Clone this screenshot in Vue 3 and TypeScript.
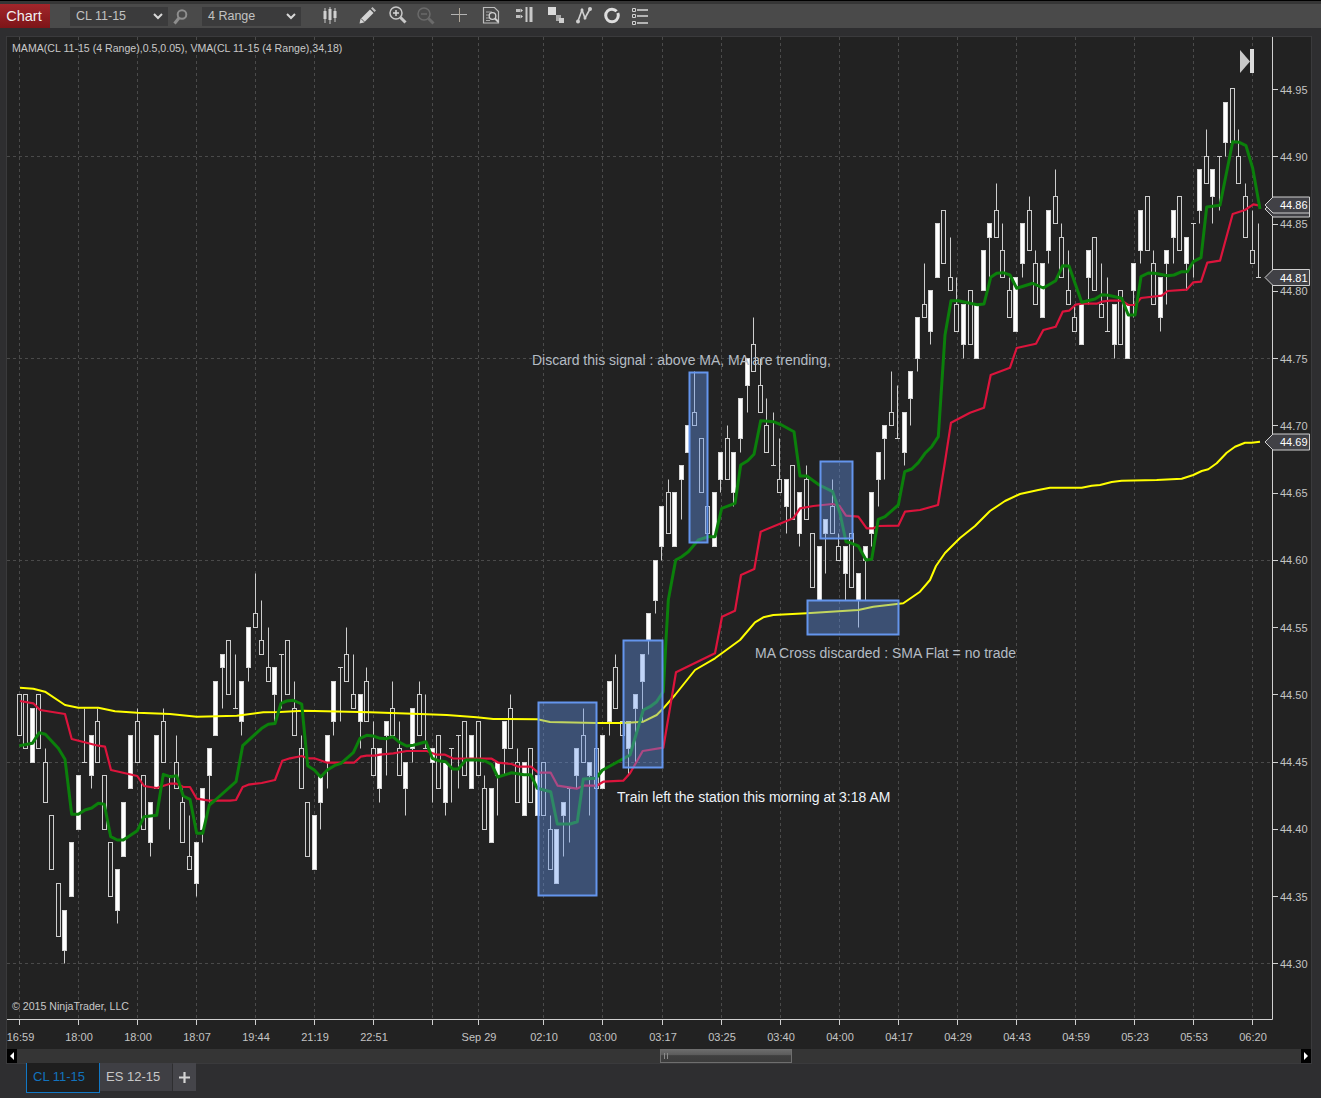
<script setup lang="ts">
interface Bar { x: number; kind: string; top: number; bot: number; high: number; low: number }

const Y0 = 963.4
const TICK = 13.46
const yOf = (t: number) => Math.round(Y0 - t * TICK)

const raw = `h20,17 h20,16 f19,15 h20,16 h15,12,16 h11,7 h6,2 f4,1,,0 f9,5 f14,10
d15,15,19,15 f17,14,,13 h18,15,19 h14,10 h9,5 f7,4,,3 f12,8 f17,13 h18,15,19 h14,10
f12,9,,8 f17,13 h18,15,19 d14,14,14,10 h15,13,17 h12,9,13 h8,7,11 f9,6,,5 f13,10,,9 f16,14,,12
f21,17 f23,22,,19 h24,20 d19,19,23,19 f21,18,,17 f25,22,,21 h26,25,29 h24,23,27 h22,21,25 f22,20,,18
d23,23,23,19 h24,20 h19,17,21 h16,13,17 h12,8 f11,7 f14,12,,10 f17,15,,13 f21,18,,17 d22,22,22,18
h23,21,25 h20,19,23 f20,18,,16 h21,18,22 h16,14,18 f16,13,,12 f18,17,,14 h19,17,21 h16,14,18 f15,13,,11
f19,16,,15 h20,17,21 d16,16,20,16 f16,15,,12 h17,13 f15,12,,11 d16,16,16,12 d17,17,17,13 h18,14 f17,13
h18,14 h13,10,14 f13,9 f15,14,,11 f18,16,,14 h19,16,20 h15,12,16 f15,11 h16,12 f14,11
h15,11 h10,7,11 f10,6 f12,11,,8 d13,13,13,9 f16,14,,13 h17,15,19 f15,14,,11 h16,13 f17,13
f21,18,,17 h22,19,23 h18,17 f18,16,,14 f20,19,,15 f23,21,,18 f26,24,,23 f30,27,,26 f34,31,,30 h35,32,36
f35,31 f37,36,,33 f40,38 h41,40,44 h39,35 h34,32 f35,31 f38,36,,35 h39,36,40 f38,35,,34
f42,39,,38 f45,43,,41 h46,44,48 h43,41,45 h40,38,42 d37,37,41,37 h36,35,39 f36,34,,32 h37,33 f35,32,,31
h36,33,37 h32,28 f31,27 f33,32,,29 h34,32,36 h31,30,32 f31,29,,27 h32,28 f29,27,,25 f31,30,,27
f35,32,,31 f38,36,,34 f40,39,,36 h41,40,44 d39,39,43,39 f41,38,,37 f44,42,,40 f48,45,,44 h49,48,52 f50,47,,46
f55,51 h56,52 h51,50,54 h49,47,51 f49,46,,45 h50,46 f49,45 f53,50 f55,54,,51 h56,54,58
h53,51,55 h50,48,51 f51,47 f55,52,,51 h56,53,57 h52,49,53 f52,48 f56,53,,52 h57,55,59 h54,51,55
h50,49,53 h48,47,49 f49,46 f53,51,,49 h54,50 h49,48,52 d47,47,51,47 f49,46,,45 h50,46 f49,45
f52,50,,48 f56,53,,52 h57,53 h52,49,53 f51,48,,47 f53,52,,49 f56,54,,52 h57,53 f54,52,,50 d55,55,55,51
f59,56,,55 h60,58,62 f59,57,,55 d60,60,60,56 f64,61,,60 h65,61 h60,58,62 h57,54,58 h53,52,56 d51,51,55,51`

const bars: Bar[] = raw.trim().split(/\s+/).map((s, i) => {
  const p = s.slice(1).split(',')
  const top = Number(p[0])
  const bot = Number(p[1])
  return {
    x: Math.floor(19 + i * 6.5588) + 0.5,
    kind: s[0],
    top: yOf(top) + 0.5,
    bot: yOf(bot) + 0.5,
    high: yOf(p[2] ? Number(p[2]) : top) + 0.5,
    low: yOf(p[3] ? Number(p[3]) : bot) + 0.5,
  }
})

const green = `19.3,745.7 32.3,743.3 39.3,732.7 45.3,734.3 58.3,748.3 65,759.3 71.7,814.3 78.3,814.3 85,810 91.7,808 98.3,803.3 104.3,804.3 110.7,836.7 117.3,840 123.3,840 137.3,830.7 144,816.7 156.7,815.3 163.3,774.3 170,776.7 176.7,775.7 183.3,796 190,799.3 196.7,833.3 202.7,833.3 209.3,805 215.3,800 236,781.7 242.7,745.7 255,734.3 261.7,728.3 268.3,724.3 275,723.5 281,703.3 286.7,701 293.3,700.3 301.7,704 307.7,765.7 314.3,770 320.7,777 327.3,770 334.3,765.7 341,763.3 353.3,752.7 360,738.3 366.7,735.3 373.3,736 380,738.3 386.7,738.7 392.7,736.7 400,742.7 406.7,746 413.3,745.3 426,741.7 432.3,758.3 438.3,760.7 445.7,761.7 452.7,769 458.3,769 465.7,760 478.3,760 485,761 491.7,764.3 497.7,777 511.7,772.7 524,774.7 530.7,774.7 537.3,788.3 550.7,791.7 557.3,824 570,824 577.3,821.7 583.3,779 596,778.3 602.3,770.3 630,755 643.3,710 650,706.7 656.7,701.7 663.3,691.7 666,640 668.3,600 675.7,560 681.7,556.7 688.3,551.7 698.3,540 708.3,536.7 715,536.7 721.7,508.3 735,503.3 740.7,465 747.7,460.7 754,454.3 760.7,420.7 773.3,421.7 781.7,425 794,431.7 800,476 806.7,476 819.3,485 832.7,491.7 840,513.3 846,541.7 851.7,543.3 858.3,546 866,560 871.7,559.3 878.3,519.3 885,516.7 898.3,505 904.7,471.7 911.7,469 918.3,462.7 925,453.3 931.7,446.7 938.3,436.7 945,335 951,300.7 958.3,300.7 970,303.3 977.3,304.7 984,304 990.7,277.3 996.7,273.3 1003.3,272.7 1010,275 1016.7,288.3 1032.7,283.3 1043.3,288 1055.7,280.7 1062.7,265.7 1069,266 1081.7,302.3 1095,299 1101.7,294.7 1108.3,295.3 1121.7,298.3 1128.3,315 1135,315 1141,276.7 1148.3,273 1155,273.3 1167.7,275.7 1174,275 1181.7,271.7 1187.3,271.7 1193.3,261.7 1201,257.7 1206.7,207 1220,205.3 1232.7,141.7 1239.3,142.3 1246,145.7 1252.7,168.3 1260,209`

const red = `20,701 33.3,703.3 40,710 65,714 71.7,739 98.3,745.7 105,746.7 111,770 137.3,776 144,786 156.7,788 170,783.7 176.7,783.7 183.3,787 190,787 196.7,798.7 209.3,800.7 230,800.7 236,800 242.7,787 248.3,784.7 261.7,783 275,780 282.3,760.7 290,758.3 301.7,756 307.7,758.3 314.3,758.3 327.3,762.7 354,762.7 360.7,756.7 366.7,755.7 375,755.7 380,754.7 393.3,753.3 406.7,751 426.7,751 436.7,754.7 445,754.7 452.7,758.3 491.7,758.7 498.3,762.7 511.7,764 518.3,766.7 531,766.7 538.3,772.7 550.7,772.7 557.7,785.7 576.7,788.7 583.3,785.7 596.7,785.7 603.3,781.7 623.3,780.7 630,773.3 642.7,751 663.3,747.7 676,672.3 715,653.3 722,616.7 735,610.7 741,575 754.3,569 760.7,531.7 793.3,518.3 800,508.3 813.3,506 832.3,504 839.3,505.7 846,515.7 858.3,516.7 866.7,528.3 873.3,528.3 878.3,526 898.3,525.7 905,511.7 920,510 938,505 945,461.7 951,422.7 970,412.7 984,407.7 990.7,375 1010,367.7 1016.7,348 1036,343.7 1043.3,330 1055.7,326.7 1062.7,311.7 1069,310.7 1075.7,304.7 1081.7,303.7 1096.7,303.7 1101.7,301.7 1110,300.7 1121.7,300.7 1128.3,305 1135,305 1141,298 1161.7,295.7 1167.7,291 1186.7,289.7 1193.3,282.3 1201,281.7 1207.3,262.7 1220,260.7 1232.7,214 1245,210 1253.3,204.3 1260,205.7`

const yellow = `20,687.7 33.3,688.7 45,691.7 65,705 78.3,707.7 98.3,707.7 115,711.3 137.3,712.7 170,714 196.7,716.7 236.7,715.7 263.3,712.3 280,712 303.3,710.7 370,712.3 420,714 446.7,715 476.7,717.3 493.3,719 537.3,719.3 550,722 596.7,723 623.3,723 643.3,721.7 656.7,715 663.3,708.3 675,695 695,670 715,658.3 740,640 755,622.3 763.3,617.3 773.3,615 806.7,613.3 858.3,610 873.3,606.7 903.3,603.3 920,591.7 930,580 936,566 945,553 960,538 975,526 990,511 1005,501 1020,494 1038.3,490 1050,487.7 1081.7,487.7 1091.7,485.7 1100,485 1111.7,482 1121.7,480.7 1156.7,480 1181.7,478.7 1193.3,475 1201.7,471 1208.3,469.3 1216.7,463.3 1226.7,452.7 1235,446.7 1245,442.7 1251.7,442.7 1260,441.7`

const gridX = [19, 78, 137, 196, 255, 314, 373, 432, 478, 543, 602, 662, 721, 780, 839, 898, 957, 1016, 1075, 1134, 1193, 1252]
const gridY = [963, 762, 560, 358, 156]
const timeLabels = [
  ['16:59', 20.5], ['18:00', 79], ['18:00', 138], ['18:07', 197], ['19:44', 256], ['21:19', 315], ['22:51', 374],
  ['Sep 29', 479], ['02:10', 544], ['03:00', 603], ['03:17', 663], ['03:25', 722], ['03:40', 781], ['04:00', 840],
  ['04:17', 899], ['04:29', 958], ['04:43', 1017], ['04:59', 1076], ['05:23', 1135], ['05:53', 1194], ['06:20', 1253],
] as [string, number][]

const prices = ['44.95', '44.90', '44.85', '44.80', '44.75', '44.70', '44.65', '44.60', '44.55', '44.50', '44.45', '44.40', '44.35', '44.30']
  .map((p, i) => ({ p, y: Math.round(89.2 + i * 67.23), ly: Math.floor(90.2 + i * 67.24) }))

const boxes = [
  { x: 538.5, y: 702.5, w: 58, h: 193 },
  { x: 623.5, y: 640.5, w: 39, h: 127 },
  { x: 689.5, y: 372.5, w: 18, h: 170 },
  { x: 820.5, y: 461.5, w: 32, h: 77 },
  { x: 807.5, y: 600.5, w: 91, h: 34 },
]

const tags = [
  { label: '44.86', y: 205, dbl: true },
  { label: '44.81', y: 277.5, dbl: false },
  { label: '44.69', y: 442, dbl: false },
]
const tagPts = (y: number) => `1265,${y} 1273,${y - 8} 1309.5,${y - 8} 1309.5,${y + 8} 1273,${y + 8}`
</script>

<template>
  <div class="app">
    <header class="toolbar">
      <div class="brand">Chart</div>
      <div class="select first"><span>CL 11-15</span><svg width="10" height="7" viewBox="0 0 10 7"><path d="M1 1l4 4 4-4" fill="none" stroke="#d8d8d8" stroke-width="2" /></svg></div>
      <svg class="ico search" width="16" height="18" viewBox="0 0 16 18"><circle cx="9" cy="6.500" r="4.300" fill="none" stroke="#8e8e8e" stroke-width="2" /><path d="M6 10l-4.500 5.500" stroke="#8e8e8e" stroke-width="3" /></svg>
      <div class="select second"><span>4 Range</span><svg width="10" height="7" viewBox="0 0 10 7"><path d="M1 1l4 4 4-4" fill="none" stroke="#d8d8d8" stroke-width="2" /></svg></div>

      <svg class="ico m-candles" width="24" height="24" viewBox="0 0 24 24"><path d="M7 4v15M12 3v17M17 4v14" stroke="#c8c8c8" /><path d="M5.500 7h3v8h-3zM10.500 5h3v11h-3zM15.500 7h3v7h-3z" fill="#d0d0d0" /></svg>
      <svg class="ico m7a" width="24" height="24" viewBox="0 0 24 24"><path d="M4.500 19.500l1-4.500L15 5.500l3.500 3.500L9 18.500z" fill="#d4d4d4" /><path d="M16 4.500l1.500-1.500 3.500 3.500-1.500 1.500z" fill="#bdbdbd" /><path d="M6 14.500l3.500 3.500" stroke="#555" /></svg>
      <svg class="ico m7b" width="24" height="24" viewBox="0 0 24 24"><circle cx="10" cy="9" r="6" fill="none" stroke="#c8c8c8" stroke-width="1.500" /><path d="M7 9h6M10 6v6" stroke="#d8d8d8" stroke-width="1.500" /><path d="M14.500 13.500l5 5" stroke="#c8c8c8" stroke-width="3" /></svg>
      <svg class="ico m4" width="24" height="24" viewBox="0 0 24 24"><circle cx="10" cy="10" r="6" fill="none" stroke="#6a6a6a" stroke-width="1.500" /><path d="M7 10h6" stroke="#6a6a6a" stroke-width="1.500" /><path d="M14.500 14.500l5 5" stroke="#6a6a6a" stroke-width="3" /></svg>
      <svg class="ico m9" width="24" height="24" viewBox="0 0 24 24"><path d="M4 10.500h16" stroke="#b4b4b4" /><path d="M12.500 4v14" stroke="#b0a698" /></svg>
      <svg class="ico m8" width="24" height="24" viewBox="0 0 24 24"><path d="M4.500 3.500h11l4 4v11.500h-15z" fill="none" stroke="#bdbdbd" stroke-width="1.200" /><path d="M7 8h6M7 11h3M7 14h3M7 16.500h4" stroke="#a8a8a8" /><circle cx="13.500" cy="12" r="3.300" fill="none" stroke="#d0d0d0" stroke-width="1.300" /><path d="M16 14.500l3.500 3.500" stroke="#d0d0d0" stroke-width="2" /></svg>
      <svg class="ico m10" width="24" height="24" viewBox="0 0 24 24"><path d="M12.500 3v15h2V3zM16.500 3v15h3V3z" fill="#c8c8c8" /><path d="M3 5h4v3H3zM3 11h4v3H3z" fill="#c0c0c0" /><path d="M7.500 4.500l2.500 2-2.500 2zM7.500 10.500l2.500 2-2.500 2z" fill="#d4d4d4" /></svg>
      <svg class="ico m7c" width="24" height="24" viewBox="0 0 24 24"><path d="M4 3h8v8H4z" fill="#dadada" /><path d="M12 11h5v6h-5z" fill="#aaaaaa" /><path d="M15 14h5v5h-5z" fill="#cfcfcf" /></svg>
      <svg class="ico m4" width="24" height="24" viewBox="0 0 24 24"><path d="M6 17L10 6l3 8 5-9" fill="none" stroke="#cfcfcf" stroke-width="1.600" /><circle cx="6" cy="17.500" r="2" fill="#cfcfcf" /><circle cx="10" cy="6" r="1.500" fill="#cfcfcf" /><circle cx="13" cy="14" r="1.500" fill="#cfcfcf" /><circle cx="18" cy="5" r="2" fill="#cfcfcf" /></svg>
      <svg class="ico m4" width="24" height="24" viewBox="0 0 24 24"><circle cx="12" cy="11.500" r="6.300" fill="none" stroke="#dedede" stroke-width="3" stroke-dasharray="34 2 3 2" /></svg>
      <svg class="ico m4" width="24" height="24" viewBox="0 0 24 24"><path d="M4.500 4.500h3v3h-3zM4.500 10.500h3v3h-3zM4.500 17.500h3v3h-3z" fill="none" stroke="#cfcfcf" /><path d="M9 6h11M9 12h11M9 19h11" stroke="#d8d8d8" stroke-width="1.500" /></svg>
    </header>

    <section class="panel">
      <svg class="chart" width="1304" height="1012" viewBox="7 37 1304 1012">
        <g class="grid">
          <line v-for="x in gridX" :key="'gx' + x" :x1="x + 0.5" :x2="x + 0.5" y1="37" y2="1019" />
          <line v-for="y in gridY" :key="'gy' + y" x1="7" x2="1272" :y1="y + 0.5" :y2="y + 0.5" />
        </g>

        <g class="candles">
          <g v-for="(b, i) in bars" :key="i">
            <line class="wick" :x1="b.x" :x2="b.x" :y1="b.high" :y2="b.low" />
            <line v-if="b.kind === 'd'" class="wick" :x1="b.x - 2.5" :x2="b.x + 2.5" :y1="b.top" :y2="b.top" />
            <rect v-else :class="b.kind === 'f' ? 'solid' : 'hollow'" :x="b.x - 2" :y="b.top" width="4" :height="b.bot - b.top" />
          </g>
        </g>

        <polyline class="ln yellow" :points="yellow" />
        <polyline class="ln red" :points="red" />
        <polyline class="ln green" :points="green" />

        <rect v-for="(r, i) in boxes" :key="'b' + i" class="box" :x="r.x" :y="r.y" :width="r.w" :height="r.h" />

        <text class="lbl legend" x="12" y="52">MAMA(CL 11-15 (4 Range),0.5,0.05), VMA(CL 11-15 (4 Range),34,18)</text>
        <text class="lbl legend" x="12" y="1010">© 2015 NinjaTrader, LLC</text>

        <text class="note dim" x="532" y="365">Discard this signal : above MA, MA are trending,</text>
        <text class="note bright" x="617" y="802">Train left the station this morning at 3:18 AM</text>
        <text class="note dim" x="755" y="658">MA Cross discarded : SMA Flat = no trade</text>

        <path class="end-tri" d="M1240 50l10 11.500-10 11.500z" />
        <path class="end-bar" d="M1250 49h4v24h-4z" />

        <path class="axis" d="M1272.500 37V1019.500H7" />
        <path v-for="x in gridX" :key="'tx' + x" class="axis" :d="`M${x + 0.5} 1020v5`" />
        <path v-for="t in prices" :key="'ty' + t.p" class="axis" :d="`M1273 ${t.y + 0.5}h5`" />

        <text v-for="t in prices" :key="'pl' + t.p" class="lbl" x="1280" :y="t.ly + 4">{{ t.p }}</text>
        <text v-for="(t, i) in timeLabels" :key="'tl' + i" class="lbl mid" :x="t[1]" y="1041">{{ t[0] }}</text>

        <g v-for="t in tags" :key="t.label">
          <polygon v-if="t.dbl" class="tag" :points="tagPts(t.y + 4)" />
          <polygon class="tag" :points="tagPts(t.y)" />
          <text class="lbl tag-t" x="1280" :y="Math.round(t.y) + 4">{{ t.label }}</text>
        </g>
      </svg>

      <div class="scroll">
        <div class="arrow"><svg width="6" height="8" viewBox="0 0 6 8"><path d="M5 0v8L1 4z" fill="#fff" /></svg></div>
        <div class="track">
          <div class="thumb"><i></i><i></i></div>
        </div>
        <div class="arrow"><svg width="6" height="8" viewBox="0 0 6 8"><path d="M1 0v8l4-4z" fill="#fff" /></svg></div>
      </div>
    </section>

    <nav class="tabs">
      <div class="tab active">CL 11-15</div>
      <div class="tab">ES 12-15</div>
      <div class="tab plus"><svg width="11" height="11" viewBox="0 0 11 11"><path d="M5.500 0v11M0 5.500h11" stroke="#d4d4d4" stroke-width="2.200" /></svg></div>
    </nav>
  </div>
</template>

<style>
html, body { margin: 0; padding: 0; background: #2e2e30; }
</style>

<style scoped>
.app {
  width: 1321px;
  height: 1098px;
  overflow: hidden;
  display: flex;
  flex-direction: column;
  background: #2e2e30;
  font-family: "Liberation Sans", Arial, sans-serif;
}
.toolbar {
  height: 24px;
  margin-top: 4px;
  box-shadow: 0 -3px 0 #363636, 0 -4px 0 #000;
  background: #4a4a4a;
  display: flex;
  align-items: center;
}
.brand {
  width: 50px;
  height: 24px;
  line-height: 24px;
  padding-right: 2px;
  box-sizing: border-box;
  text-align: center;
  color: #f0f0f0;
  font-size: 14.500px;
  background: linear-gradient(#a2262b, #7d1518);
}
.select {
  width: 98px;
  height: 19px;
  background: #3b3b3c;
  display: flex;
  align-items: center;
  justify-content: space-between;
  padding: 0 5px 0 6px;
  box-sizing: border-box;
  color: #c2c2c2;
  font-size: 12.500px;
}
.first { margin-left: 20px; }
.second { margin-left: 13px; width: 99px; }
.ico { display: block; flex: none; }
.search { margin-left: 5px; margin-top: 1px; }
.m-candles { margin-left: 17px; }
.m7a { margin-left: 13px; }
.m7b { margin-left: 7px; }
.m4 { margin-left: 4px; }
.m9 { margin-left: 9px; }
.m8 { margin-left: 8px; }
.m10 { margin-left: 10px; }
.m7c { margin-left: 7px; }

.panel {
  margin: 9px 10px 0 7px;
  width: 1304px;
  flex: none;
  box-shadow: 0 0 0 1px #3a3a3c;
  background: #222222;
}
.chart { display: block; }
.grid line { stroke: #4a4a4a; stroke-dasharray: 3 3; stroke-width: 1; }
.wick { stroke: #cdcdcd; stroke-width: 1; }
.hollow { fill: #222222; stroke: #cdcdcd; stroke-width: 1; }
.solid { fill: #ffffff; stroke: #d4d4d4; stroke-width: 1; }
.ln { fill: none; stroke-linejoin: round; }
.green { stroke: #0b800b; stroke-width: 3; }
.red { stroke: #dc143c; stroke-width: 2.200; }
.yellow { stroke: #ffff00; stroke-width: 2; }
.box { fill: rgba(100, 149, 237, 0.4); stroke: #6495ed; stroke-width: 2; }
.lbl { fill: #c4c4c4; font-size: 11px; font-family: "Liberation Sans", Arial, sans-serif; }
.legend { fill: #c8c8c8; font-size: 10.600px; }
.mid { text-anchor: middle; }
.note { font-size: 14px; font-family: "Liberation Sans", Arial, sans-serif; }
.dim { fill: #b4bcc4; }
.bright { fill: #eef3f8; }
.end-tri { fill: #c9c9c9; }
.end-bar { fill: #dcdcdc; }
.axis { fill: none; stroke: #d0d0d0; stroke-width: 1; }
.tag { fill: #414146; stroke: #cfcfcf; stroke-width: 1; }
.tag-t { fill: #ffffff; }

.scroll {
  height: 14px;
  background: #353535;
  display: flex;
  align-items: center;
}
.arrow {
  width: 10px;
  height: 14px;
  background: #000;
  display: flex;
  align-items: center;
  justify-content: center;
  flex: none;
}
.track { flex: 1; height: 14px; padding-left: 643px; }
.thumb {
  width: 127px;
  height: 9px;
  border: 1px solid #6e6e6e;
  background: linear-gradient(#6b6b6b 0, #5a5a5a 45%, #3f3f3f 46%, #3c3c3c 100%);
  display: flex;
  gap: 2px;
  padding: 3px 0 0 3px;
}
.thumb i { display: block; width: 1px; height: 6px; background: #8a8a8a; }

.tabs {
  margin-left: 26px;
  display: flex;
  align-items: flex-start;
  height: 35px;
}
.tab {
  width: 66px;
  height: 28px;
  line-height: 28px;
  background: #3f3f44;
  color: #c8c8c8;
  font-size: 13px;
  padding-left: 6px;
  margin-right: 1px;
}
.tab.active {
  width: 66px;
  height: 29px;
  padding-left: 6px;
  background: #1e1e1e;
  color: #1273bd;
  border: 1px solid #1178c6;
  border-top: 0;
  margin-right: 0;
}
.tab.plus {
  width: 23px;
  padding-left: 0;
  display: flex;
  align-items: center;
  justify-content: center;
  background: #45454a;
}
</style>
